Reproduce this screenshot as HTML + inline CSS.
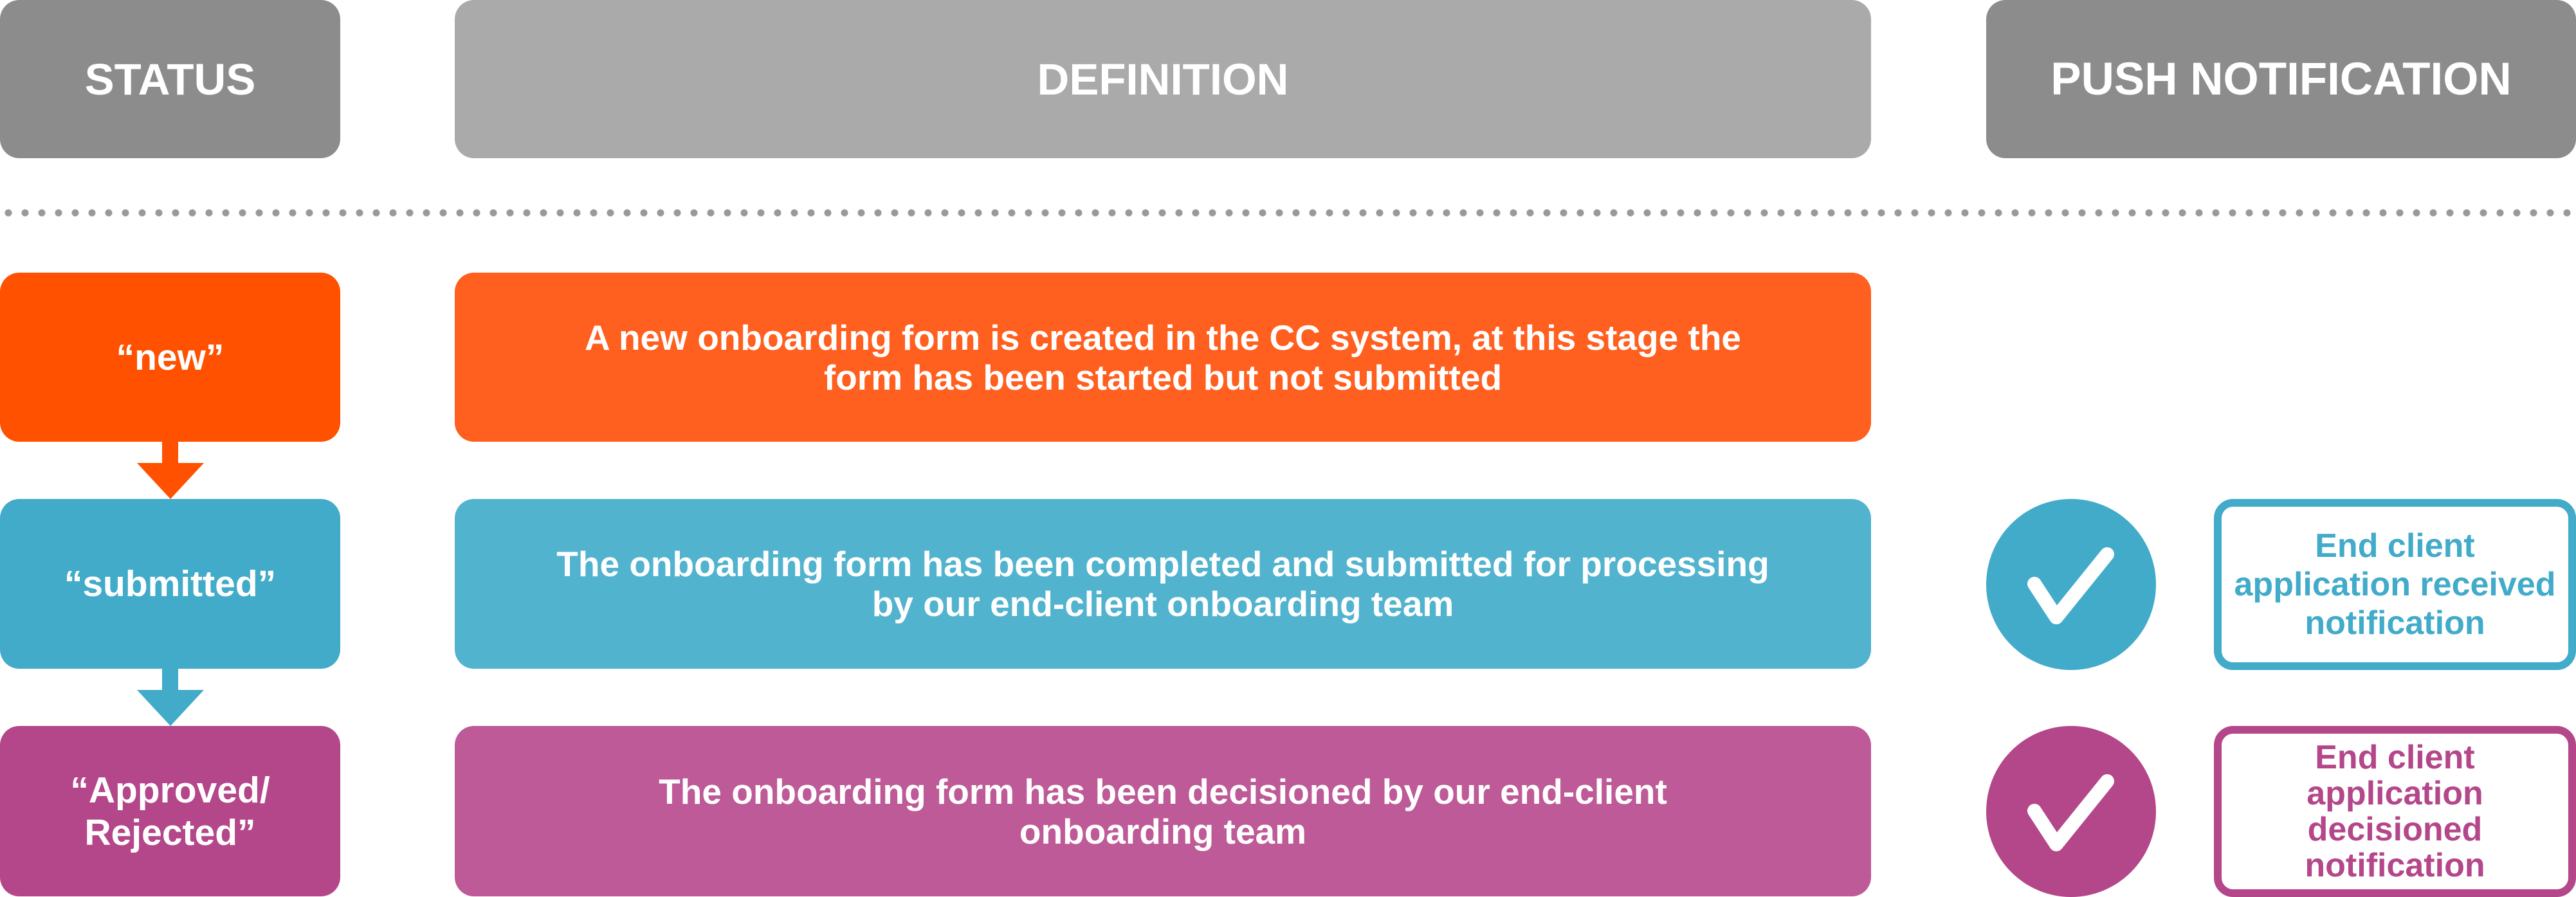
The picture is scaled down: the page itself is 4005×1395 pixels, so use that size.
<!DOCTYPE html>
<html><head><meta charset="utf-8"><style>
*{margin:0;padding:0;box-sizing:border-box}
body{width:4005px;height:1394px;background:#fff;position:relative;overflow:hidden;font-family:"Liberation Sans",sans-serif;font-weight:bold;color:#fff}
.b{position:absolute;border-radius:30px;display:flex;align-items:center;justify-content:center;text-align:center}
.h{font-size:69px;background:#8c8c8c;top:0;height:246px}
.t{font-size:55px;line-height:62px}
.s{font-size:57px;line-height:66px}
.dots{position:absolute;left:0;top:321px;width:4005px;height:20px;background:radial-gradient(circle,#999 5px,transparent 6px) 0 0/26px 20px repeat-x}
.arr{position:absolute}
.c{position:absolute;width:264px;height:266px;border-radius:50%}
.o{position:absolute;left:3442px;width:563px;height:266px;border:12px solid;border-radius:30px;display:flex;align-items:center;justify-content:center;text-align:center;font-size:52px;line-height:60px;background:#fff}
</style></head><body>
<div class="b h" style="left:0;width:529px">STATUS</div>
<div class="b h" style="left:707px;width:2202px;background:#aaaaaa">DEFINITION</div>
<div class="b h" style="left:3088px;width:917px;font-size:71px">PUSH NOTIFICATION</div>
<div class="dots"></div>

<div class="b s" style="left:0;top:424px;width:529px;height:263px;background:#ff5100">“new”</div>
<div class="b t" style="left:707px;top:424px;width:2202px;height:263px;background:#ff5f1f">A new onboarding form is created in the CC system, at this stage the<br>form has been started but not submitted</div>
<svg class="arr" style="left:213px;top:687px" width="104" height="89"><rect x="39" y="0" width="25" height="34" fill="#ff5100"/><polygon points="0,33 104,33 52,89" fill="#ff5100"/></svg>

<div class="b s" style="left:0;top:776px;width:529px;height:264px;background:#41abc9">“submitted”</div>
<div class="b t" style="left:707px;top:776px;width:2202px;height:264px;background:#52b3cf">The onboarding form has been completed and submitted for processing<br>by our end-client onboarding team</div>
<svg class="arr" style="left:213px;top:1040px" width="104" height="89"><rect x="39" y="0" width="25" height="34" fill="#41abc9"/><polygon points="0,33 104,33 52,89" fill="#41abc9"/></svg>
<div class="c" style="left:3088px;top:776px;background:#41abc9"></div>
<svg class="arr" style="left:3088px;top:776px" width="264" height="266"><path d="M75 132 L109 184 L188 86" fill="none" stroke="#fff" stroke-width="22" stroke-linecap="round" stroke-linejoin="round"/></svg>
<div class="o" style="top:776px;border-color:#41abc9;color:#41abc9">End client<br>application received<br>notification</div>

<div class="b s" style="left:0;top:1129px;width:529px;height:265px;background:#b4468a">“Approved/<br>Rejected”</div>
<div class="b t" style="left:707px;top:1129px;width:2202px;height:265px;background:#bd5a97">The onboarding form has been decisioned by our end-client<br>onboarding team</div>
<div class="c" style="left:3088px;top:1129px;background:#b4468a"></div>
<svg class="arr" style="left:3088px;top:1129px" width="264" height="266"><path d="M75 132 L109 184 L188 86" fill="none" stroke="#fff" stroke-width="22" stroke-linecap="round" stroke-linejoin="round"/></svg>
<div class="o" style="top:1129px;border-color:#b4468a;color:#b4468a;line-height:56px">End client<br>application<br>decisioned<br>notification</div>
</body></html>
